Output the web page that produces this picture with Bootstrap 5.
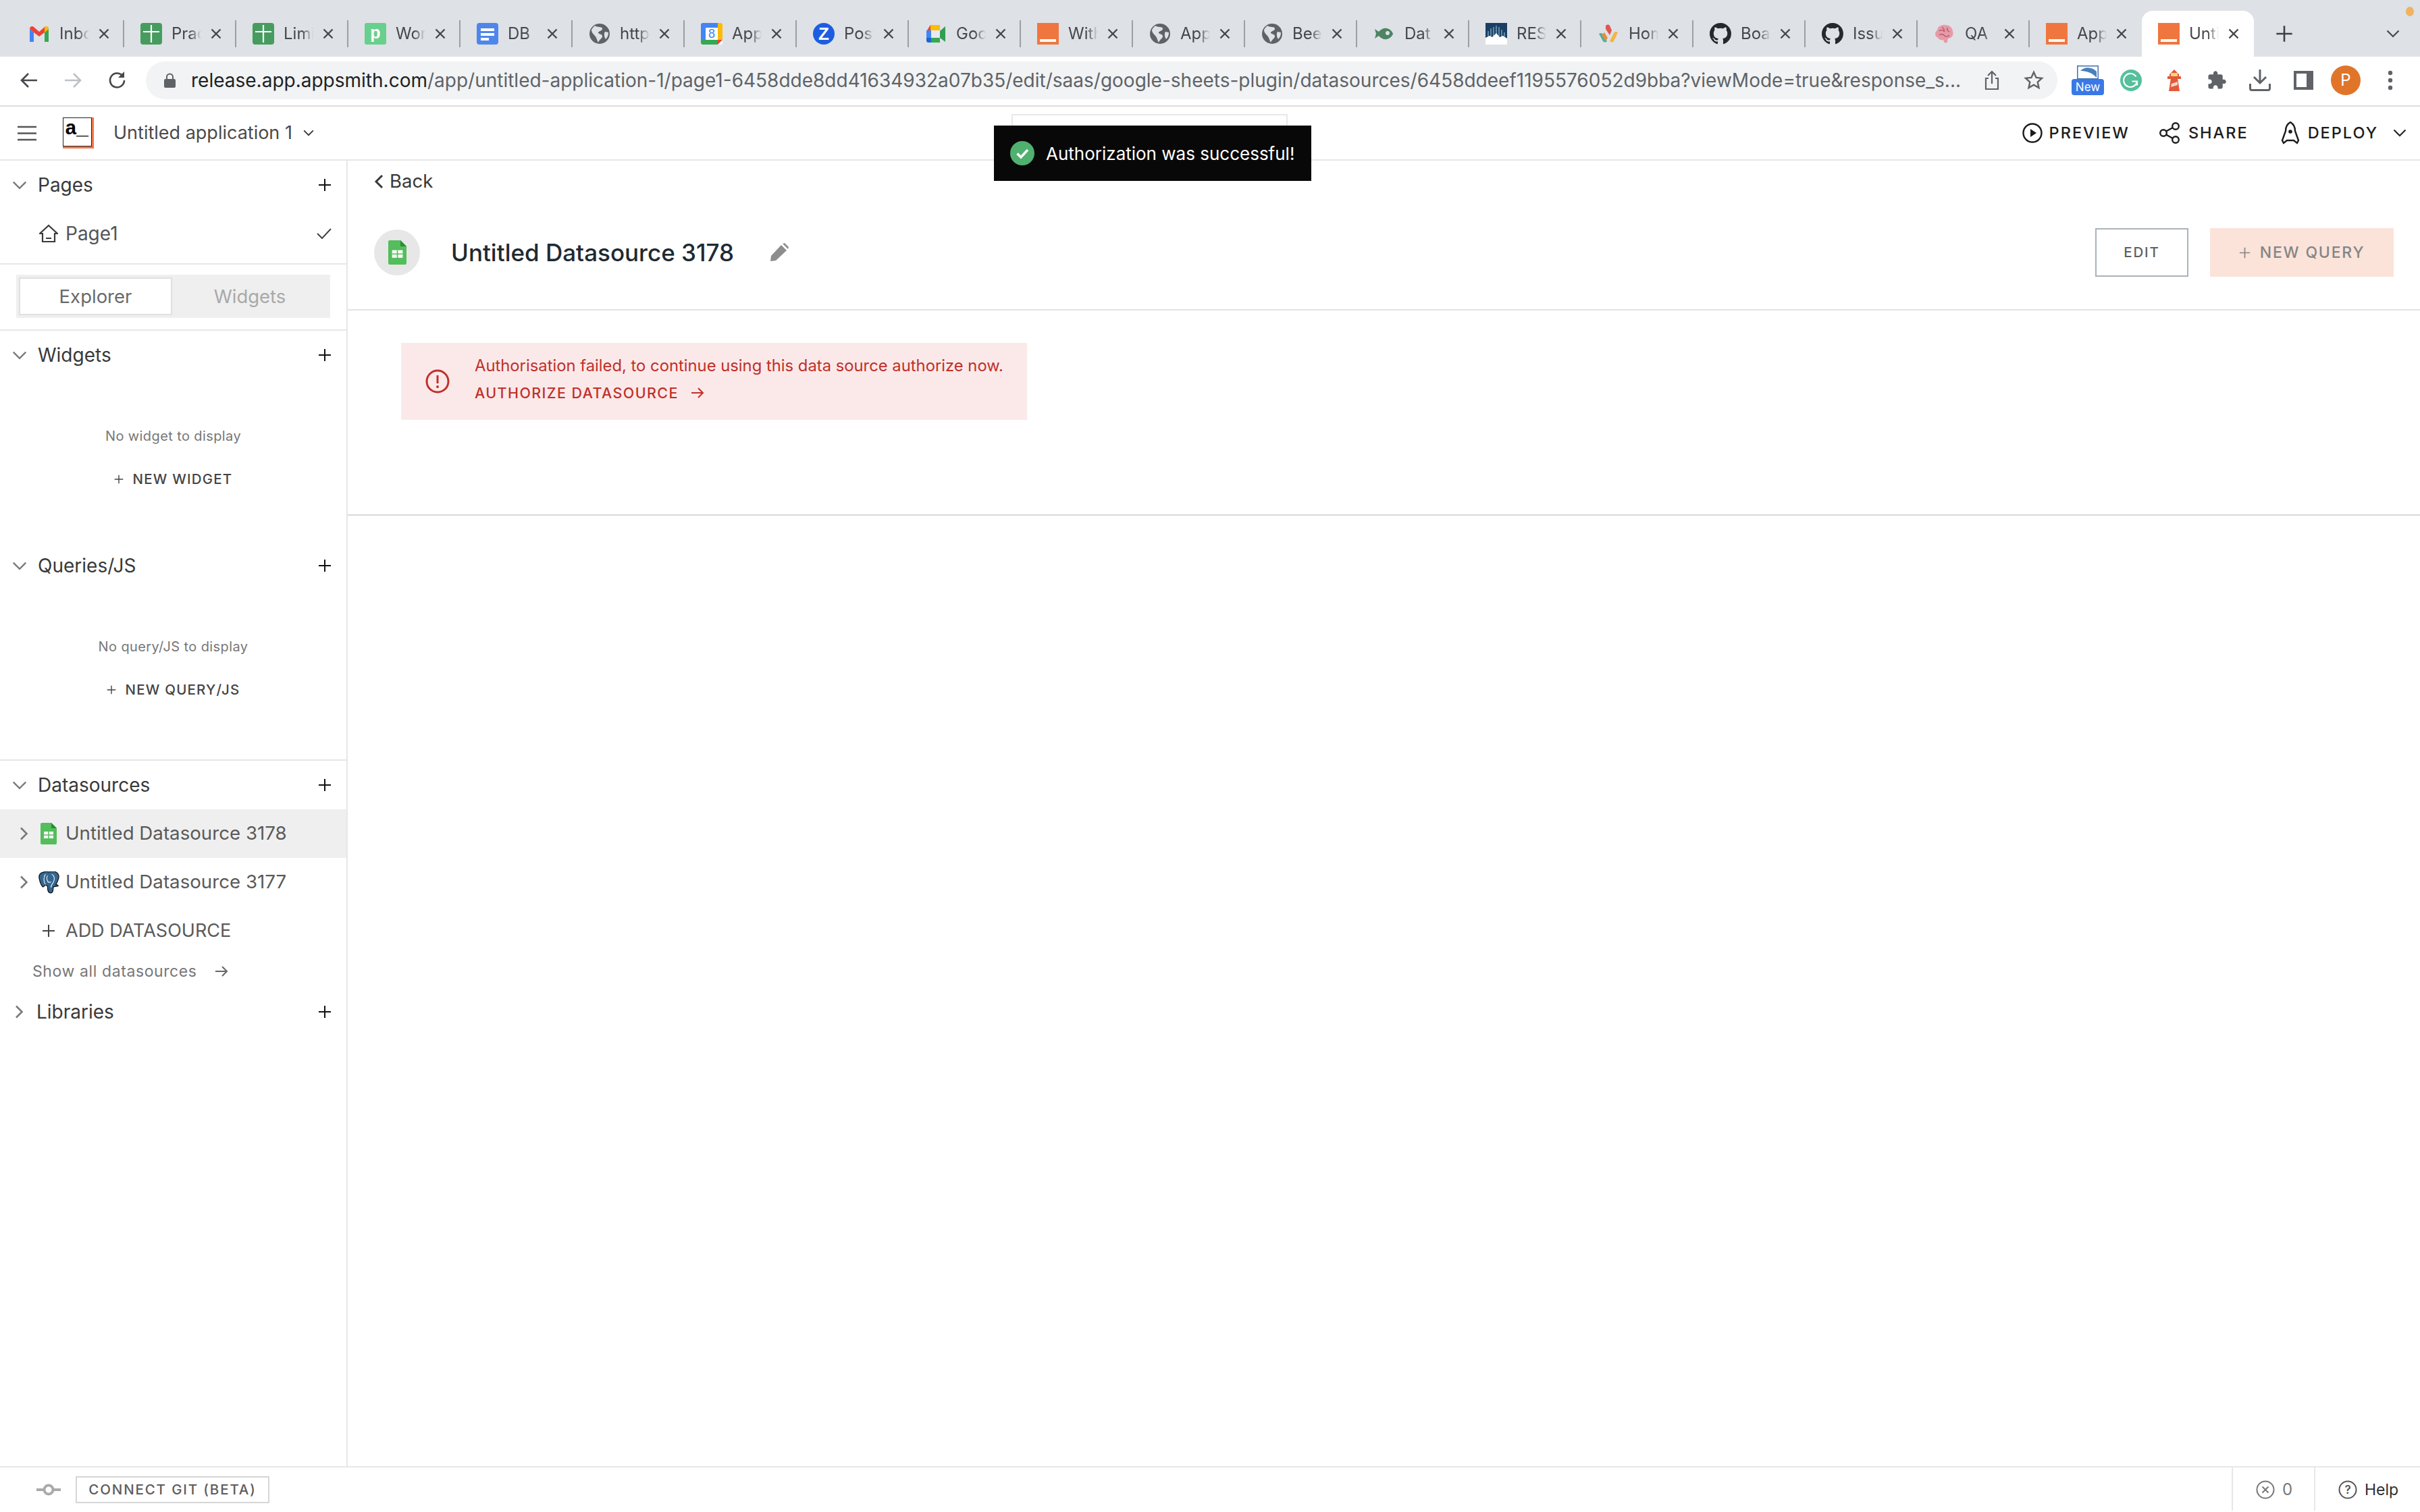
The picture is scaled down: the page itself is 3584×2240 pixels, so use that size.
<!DOCTYPE html>
<html lang="en">
<head>
<meta charset="UTF-8" />
<title>Untitled Datasource 3178</title>
<link href="https://cdn.jsdelivr.net/npm/bootstrap@5.3.3/dist/css/bootstrap.min.css" rel="stylesheet">
<style>
html, body { height: 100%; }
body { font-family: Inter, "Liberation Sans", sans-serif; color: #393939; background: #fff; overflow: hidden; }
svg { display: block; flex: none; }
.shell { height: 2240px; }

/* browser chrome */
.tabstrip { height: 84px; background: #dee1e6; padding: 16px 0 0 18px; position: relative; }
.btab { width: 166px; height: 68px; flex: none; }
.btab-in { height: 40px; width: 100%; padding-left: 24px; border-right: 2px solid #9aa0a6; }
.btab.on { background: #fff; border-radius: 16px 16px 0 0; }
.btab.on .btab-in, .btab.last .btab-in { border-right-color: transparent; }
.btab-txt { width: 44px; margin-left: 14px; font-size: 24px; line-height: 32px; color: #45474b; white-space: nowrap; -webkit-mask-image: linear-gradient(90deg, #000 62%, transparent 100%); mask-image: linear-gradient(90deg, #000 62%, transparent 100%); }
.btab-x { margin-left: 12px; }
.strip-plus { margin-left: 32px; align-self: center; }
.strip-down { margin-left: 138px; align-self: center; }
.strip-dot { position: absolute; right: 9px; top: 10px; width: 12px; height: 14px; border-radius: 50%; background: #f0b35e; }

.toolbar { height: 74px; padding-bottom: 2px; border-bottom: 2px solid #dedede; padding-left: 30px; }
.tb-nav { width: 65px; }
.omni { width: 2831px; height: 56px; margin-left: 28px; background: #f1f3f4; border-radius: 28px; padding-left: 27px; }
.omni-url { width: 2622px; margin-left: 23px; font-size: 28px; line-height: 36px; color: #5f6368; white-space: nowrap; }
.omni-url b { font-weight: 400; color: #202124; }
.omni-tail { margin-left: 34px; gap: 36px; }
.ext-row { margin-left: 21px; }
.ext-new { width: 48px; height: 44px; position: relative; }
.ext-new span { display: block; height: 24px; margin-top: 20px; background: #3b78e7; color: #fff; font-size: 17px; line-height: 24px; text-align: center; border-radius: 4px; position: relative; }
.ext-new svg { position: absolute; left: 8px; top: 0; }
.avatar { width: 44px; height: 44px; border-radius: 50%; background: #e0752a; color: #fff; font-size: 24px; line-height: 44px; text-align: center; }

/* app header */
.apphead { height: 80px; border-bottom: 2px solid #e7e7e7; padding: 0 20px 0 26px; }
.app-logo { width: 46px; height: 46px; margin-left: 39px; position: relative; background: #f0774a; }
.app-logo div { width: 43px; height: 43px; background: #fff; border: 1.5px solid #222; font: 700 30px/32px "Liberation Mono", monospace; color: #000; padding-left: 2px; letter-spacing: -1px; }
.app-name { margin-left: 29px; font-size: 27px; color: #4b4b4b; line-height: 36px; }
.head-act { font-size: 23.5px; font-weight: 500; letter-spacing: 2px; color: #1c1c1c; line-height: 30px; }

/* body */
.workarea { height: 1934px; }
.sidebar { width: 515px; flex: none; border-right: 2px solid #e7e7e7; }
.sec-head { height: 72px; padding: 0 22px 0 18px; font-size: 28px; color: #393939; }
.sec-head .sec-name { margin-left: 16px; line-height: 36px; }
.sec-head .sec-plus { margin-left: auto; }
.page-row { height: 72px; padding: 0 22px 0 58px; font-size: 28px; color: #555; margin-bottom: 8px; }
.page-row span { margin-left: 11px; }
.rule { height: 2px; background: #e7e7e7; }
.switcher-wrap { padding: 15px 24px 17px; }
.switcher { height: 64px; background: #efefef; padding: 4px; font-size: 27.5px; text-align: center; }
.sw-on { width: 227px; height: 56px; background: #fff; border: 2px solid #e0e0e0; color: #6a6a6a; line-height: 52px; }
.sw-off { flex: 1; color: #a9a9a9; line-height: 56px; }
.empty-box { text-align: center; padding-top: 70px; }
.empty-box.w { height: 240px; }
.empty-box.q { height: 251px; }
.empty-txt { font-size: 20px; line-height: 28px; letter-spacing: .4px; color: #777; }
.empty-btn { margin-top: 36px; font-size: 20.5px; line-height: 28px; font-weight: 500; letter-spacing: 1.2px; color: #444; gap: 14px; }
.ds-row { height: 72px; padding-left: 29px; font-size: 27.7px; color: #5a5a5a; }
.ds-row.sel { background: #efefef; }
.ds-row .ds-ico { width: 32px; margin-left: 14px; margin-right: 9px; }
.ds-add { padding-left: 62px; font-size: 27px; }
.ds-add span { margin-left: 15px; }
.ds-all { height: 48px; padding-left: 48px; font-size: 23px; letter-spacing: .6px; color: #777; gap: 26px; }

.main-pane { flex: 1; min-width: 0; }
.back-row { height: 62px; padding-left: 39px; font-size: 27.5px; color: #393939; }
.back-row span { margin-left: 9px; }
.ds-head { height: 160px; padding: 0 39px 0 39px; border-bottom: 2px solid #e3e3e3; }
.ds-circle { width: 68px; height: 68px; border-radius: 50%; background: #e7e7e7; margin-top: -10px; }
.ds-title { margin: -10px 0 0 46px; font-size: 35px; line-height: 44px; font-weight: 500; color: #1e2a32; }
.ds-pencil { margin: -10px 0 0 53px; }
.edit-btn, .newq-btn { height: 72px; border-radius: 0; font-size: 20.5px; font-weight: 500; letter-spacing: 1.8px; margin-top: -10px; }
.edit-btn { width: 138px; border: 2px solid #a9b3bb; color: #5f5f5f; }
.newq-btn { width: 272px; margin-left: 32px; background: #fbe3da; color: #858585; border: 0; gap: 14px; font-size: 23px; }
.authbox { height: 304px; padding: 48px 0 0 79px; border-bottom: 2px solid #d5dade; }
.authbanner { width: 927px; height: 114px; background: #fbe9e9; padding-left: 36px; color: #c0302a; }
.auth-txt { margin: -7px 0 0 37px; }
.auth-msg { font-size: 23.8px; line-height: 30px; white-space: nowrap; }
.auth-link { margin-top: 10px; font-size: 21.5px; line-height: 30px; font-weight: 500; letter-spacing: 1.4px; gap: 18px; }

/* footer */
.appfoot { height: 66px; border-top: 2px solid #e7e7e7; padding: 2px 0 0 54px; }
.git-btn { width: 287px; height: 40px; margin-left: 22px; border: 2px solid #d6d6d6; font-size: 20.5px; line-height: 36px; font-weight: 500; letter-spacing: 1.85px; color: #5c5c5c; text-align: center; white-space: nowrap; }
.foot-err { width: 122px; margin: -2px 0 0 auto; height: 64px; border-left: 2px solid #e7e7e7; padding: 2px 0 0 34px; gap: 11px; font-size: 24px; color: #777; }
.foot-help { width: 157px; margin-top: -2px; height: 64px; border-left: 2px solid #e7e7e7; padding: 2px 0 0 34px; gap: 11px; font-size: 23px; color: #2b2f33; }

/* over the header */
.searchghost { position: absolute; left: 1498px; top: 169px; width: 409px; height: 40px; border: 2px solid #e8e8e8; background: #fff; }
.toast-ok { position: absolute; left: 1472px; top: 186px; width: 470px; height: 82px; background: #090808; padding-left: 24px; color: #fff; font-size: 26px; }
.toast-ok span { margin-left: 17px; white-space: nowrap; }
</style>
</head>
<body>
<svg class="d-none">
  <symbol id="i-x" viewBox="0 0 20 20"><path d="M3.5 3.5l13 13M16.5 3.5l-13 13" stroke="#45474b" stroke-width="2.4" fill="none"/></symbol>
  <symbol id="f-gmail" viewBox="0 0 32 32"><path d="M2 28V9l6 5v14z" fill="#4285f4"/><path d="M24 28V14l6-5v19z" fill="#34a853"/><path d="M2 9c0-4 4-5 6-3l8 7 8-7c2-2 6-1 6 3l-6 5-8 6-8-6z" fill="#ea4335"/><path d="M24 14V6c2-2 6-1 6 3z" fill="#fbbc04"/></symbol>
  <symbol id="f-sheet" viewBox="0 0 32 32"><rect width="32" height="32" rx="4" fill="#469c5e"/><path d="M16 3v26M4 13h24" stroke="#fff" stroke-width="2.2"/></symbol>
  <symbol id="f-p" viewBox="0 0 32 32"><rect width="32" height="32" rx="3" fill="#69cf8d"/><text x="16" y="23" text-anchor="middle" font-family="Liberation Sans" font-weight="700" font-size="25" fill="#fff">p</text></symbol>
  <symbol id="f-doc" viewBox="0 0 32 32"><rect width="32" height="32" rx="4" fill="#4f86ec"/><path d="M6 8h20v4H6zM6 15h20v4H6zM6 22h12v4H6z" fill="#fff"/></symbol>
  <symbol id="f-globe" viewBox="0 0 32 32"><circle cx="16" cy="16" r="15" fill="#5f6368"/><path d="M9 4c4 3 10 1 11 4s-5 4-6 6 5 2 6 5-5 6-6 10c-2-3-2-7-5-10S4 13 4 11s3-5 5-7zM24 13l5 1c0 4-1 7-4 10-2-3-3-8-1-11z" fill="#dee1e6"/></symbol>
  <symbol id="f-cal" viewBox="0 0 32 32"><rect width="32" height="32" rx="3" fill="#fff"/><path d="M0 7V3a3 3 0 0 1 3-3h23v7z" fill="#4285f4"/><path d="M0 7h7v18H0z" fill="#4285f4"/><path d="M25 0h4a3 3 0 0 1 3 3v22h-7z" fill="#fbbc04"/><path d="M0 25h25v7H3a3 3 0 0 1-3-3z" fill="#34a853"/><path d="M25 25h7l-7 7z" fill="#ea4335"/><text x="16" y="22" text-anchor="middle" font-family="Liberation Sans" font-size="18" fill="#4285f4">8</text></symbol>
  <symbol id="f-zoom" viewBox="0 0 32 32"><circle cx="16" cy="16" r="16" fill="#1d5de0"/><text x="16" y="25" text-anchor="middle" font-family="Liberation Sans" font-weight="700" font-size="26" fill="#fff">Z</text></symbol>
  <symbol id="f-meet" viewBox="0 0 32 32"><path d="M8 3h14v9H3z" fill="#fbbc04"/><path d="M2 11h7v11H2z" fill="#4285f4"/><path d="M2 22h7v7H5a3 3 0 0 1-3-3z" fill="#1967d2"/><path d="M9 22h13v7H9z" fill="#34a853"/><path d="M22 12v10l8 6V5z" fill="#2f9e52"/><path d="M9 11h13v11H9z" fill="#e7eaf0"/><path d="M3 11l5-8v8z" fill="#ea4335"/></symbol>
  <symbol id="f-app" viewBox="0 0 32 32"><rect width="32" height="32" fill="#f0763f"/><rect x="4" y="24" width="24" height="4" fill="#fff"/></symbol>
  <symbol id="f-fish" viewBox="0 0 32 32"><path d="M2 9l6 4c3-4 8-6 12-5 5 1 8 5 9 8-1 3-4 7-9 8-4 1-9-1-12-5l-6 4 2-7z" fill="#4c8464"/><circle cx="21" cy="15" r="3" fill="#dee1e6"/></symbol>
  <symbol id="f-res" viewBox="0 0 32 32"><rect width="32" height="32" fill="#1b3f63"/><path d="M4 20V12M8 20V8M12 20V6M16 20V4M20 20V6M24 20V10M28 20V14" stroke="#6f9bb8" stroke-width="1.6"/><path d="M0 32V22l6-3 4 2 6-6 5 6 5-2 6 4v9z" fill="#fff"/></symbol>
  <symbol id="f-flower" viewBox="0 0 32 32"><path d="M2 16c3-2 5-1 6 1l6 10c-2 2-4 2-6 0z" fill="#45b39d"/><path d="M12 4c2-2 5-2 6 0l3 7-3 7-6-9z" fill="#e2574c"/><path d="M30 14c-3-2-5-1-6 1l-6 12c2 2 4 2 6 0z" fill="#f2b544"/><path d="M10 14l5 8-3 5-6-9z" fill="#e98b3a"/></symbol>
  <symbol id="f-gh" viewBox="0 0 16 16"><path fill="#24292e" d="M8 0C3.58 0 0 3.58 0 8c0 3.54 2.29 6.53 5.47 7.59.4.07.55-.17.55-.38 0-.19-.01-.82-.01-1.49-2.01.37-2.53-.49-2.69-.94-.09-.23-.48-.94-.82-1.13-.28-.15-.68-.52-.01-.53.63-.01 1.08.58 1.23.82.72 1.21 1.87.87 2.33.66.07-.52.28-.87.51-1.07-1.78-.2-3.64-.89-3.64-3.95 0-.87.31-1.59.82-2.15-.08-.2-.36-1.02.08-2.12 0 0 .67-.21 2.2.82.64-.18 1.32-.27 2-.27.68 0 1.36.09 2 .27 1.53-1.04 2.2-.82 2.2-.82.44 1.1.16 1.92.08 2.12.51.56.82 1.27.82 2.15 0 3.07-1.87 3.75-3.65 3.95.29.25.54.73.54 1.48 0 1.07-.01 1.93-.01 2.2 0 .21.15.46.55.38A8.013 8.013 0 0016 8c0-4.42-3.58-8-8-8z"/></symbol>
  <symbol id="f-brain" viewBox="0 0 32 32"><path d="M6 22C1 20 1 13 5 11c0-5 6-9 12-8 6 0 11 4 11 10 2 5-2 10-7 10l-1 5c-1 2-4 2-5 0l-1-3c-3 1-6 0-8-3z" fill="#e79aa7"/><path d="M8 12c3-3 6-1 8 1M12 6c3 2 4 4 3 7M20 7c-1 3 0 5 3 6M8 18c3-2 6-1 8 1s5 1 7-1" stroke="#b65a6e" stroke-width="1.5" fill="none"/></symbol>
  <symbol id="i-sheet" viewBox="0 0 24 32"><path d="M2 0h14l8 8v22a2 2 0 0 1-2 2H2a2 2 0 0 1-2-2V2a2 2 0 0 1 2-2z" fill="#53be5b"/><path d="M16 0l8 8h-8z" fill="#2f8a3a"/><path d="M5 13h14v10H5z" fill="#fff"/><path d="M12 13v10M5 18h14" stroke="#53be5b" stroke-width="1.5"/></symbol>
  <symbol id="i-plus" viewBox="0 0 20 20"><path d="M10 1v18M1 10h18" stroke="currentColor" stroke-width="2" fill="none"/></symbol>
  <symbol id="i-chev" viewBox="0 0 20 12"><path d="M1.5 1.5L10 10l8.500-8.500" stroke="currentColor" stroke-width="2.2" fill="none"/></symbol>
  <symbol id="i-chevr" viewBox="0 0 12 20"><path d="M1.5 1.5L10 10l-8.500 8.500" stroke="currentColor" stroke-width="2.6" fill="none"/></symbol>
  <symbol id="i-arrow" viewBox="0 0 20 18"><path d="M1 9h17M11 2l7 7-7 7" stroke="currentColor" stroke-width="2" fill="none"/></symbol>
</svg>

<div class="shell d-flex flex-column">

  <div class="tabstrip d-flex">
    <div class="btab d-flex align-items-center"><div class="btab-in d-flex align-items-center"><svg width="32" height="32"><use href="#f-gmail"/></svg><div class="btab-txt">Inbox</div><svg class="btab-x" width="20" height="20"><use href="#i-x"/></svg></div></div>
    <div class="btab d-flex align-items-center"><div class="btab-in d-flex align-items-center"><svg width="32" height="32"><use href="#f-sheet"/></svg><div class="btab-txt">Pract</div><svg class="btab-x" width="20" height="20"><use href="#i-x"/></svg></div></div>
    <div class="btab d-flex align-items-center"><div class="btab-in d-flex align-items-center"><svg width="32" height="32"><use href="#f-sheet"/></svg><div class="btab-txt">Limit</div><svg class="btab-x" width="20" height="20"><use href="#i-x"/></svg></div></div>
    <div class="btab d-flex align-items-center"><div class="btab-in d-flex align-items-center"><svg width="32" height="32"><use href="#f-p"/></svg><div class="btab-txt">Work</div><svg class="btab-x" width="20" height="20"><use href="#i-x"/></svg></div></div>
    <div class="btab d-flex align-items-center"><div class="btab-in d-flex align-items-center"><svg width="32" height="32"><use href="#f-doc"/></svg><div class="btab-txt">DB</div><svg class="btab-x" width="20" height="20"><use href="#i-x"/></svg></div></div>
    <div class="btab d-flex align-items-center"><div class="btab-in d-flex align-items-center"><svg width="32" height="32"><use href="#f-globe"/></svg><div class="btab-txt">https</div><svg class="btab-x" width="20" height="20"><use href="#i-x"/></svg></div></div>
    <div class="btab d-flex align-items-center"><div class="btab-in d-flex align-items-center"><svg width="32" height="32"><use href="#f-cal"/></svg><div class="btab-txt">Appl</div><svg class="btab-x" width="20" height="20"><use href="#i-x"/></svg></div></div>
    <div class="btab d-flex align-items-center"><div class="btab-in d-flex align-items-center"><svg width="32" height="32"><use href="#f-zoom"/></svg><div class="btab-txt">Post</div><svg class="btab-x" width="20" height="20"><use href="#i-x"/></svg></div></div>
    <div class="btab d-flex align-items-center"><div class="btab-in d-flex align-items-center"><svg width="32" height="32"><use href="#f-meet"/></svg><div class="btab-txt">Goog</div><svg class="btab-x" width="20" height="20"><use href="#i-x"/></svg></div></div>
    <div class="btab d-flex align-items-center"><div class="btab-in d-flex align-items-center"><svg width="32" height="32"><use href="#f-app"/></svg><div class="btab-txt">With</div><svg class="btab-x" width="20" height="20"><use href="#i-x"/></svg></div></div>
    <div class="btab d-flex align-items-center"><div class="btab-in d-flex align-items-center"><svg width="32" height="32"><use href="#f-globe"/></svg><div class="btab-txt">Appl</div><svg class="btab-x" width="20" height="20"><use href="#i-x"/></svg></div></div>
    <div class="btab d-flex align-items-center"><div class="btab-in d-flex align-items-center"><svg width="32" height="32"><use href="#f-globe"/></svg><div class="btab-txt">Beet</div><svg class="btab-x" width="20" height="20"><use href="#i-x"/></svg></div></div>
    <div class="btab d-flex align-items-center"><div class="btab-in d-flex align-items-center"><svg width="32" height="32"><use href="#f-fish"/></svg><div class="btab-txt">Dat</div><svg class="btab-x" width="20" height="20"><use href="#i-x"/></svg></div></div>
    <div class="btab d-flex align-items-center"><div class="btab-in d-flex align-items-center"><svg width="32" height="32"><use href="#f-res"/></svg><div class="btab-txt">RES</div><svg class="btab-x" width="20" height="20"><use href="#i-x"/></svg></div></div>
    <div class="btab d-flex align-items-center"><div class="btab-in d-flex align-items-center"><svg width="32" height="32"><use href="#f-flower"/></svg><div class="btab-txt">Hom</div><svg class="btab-x" width="20" height="20"><use href="#i-x"/></svg></div></div>
    <div class="btab d-flex align-items-center"><div class="btab-in d-flex align-items-center"><svg width="32" height="32"><use href="#f-gh"/></svg><div class="btab-txt">Boar</div><svg class="btab-x" width="20" height="20"><use href="#i-x"/></svg></div></div>
    <div class="btab d-flex align-items-center"><div class="btab-in d-flex align-items-center"><svg width="32" height="32"><use href="#f-gh"/></svg><div class="btab-txt">Issue</div><svg class="btab-x" width="20" height="20"><use href="#i-x"/></svg></div></div>
    <div class="btab d-flex align-items-center"><div class="btab-in d-flex align-items-center"><svg width="32" height="32"><use href="#f-brain"/></svg><div class="btab-txt">QA</div><svg class="btab-x" width="20" height="20"><use href="#i-x"/></svg></div></div>
    <div class="btab last d-flex align-items-center"><div class="btab-in d-flex align-items-center"><svg width="32" height="32"><use href="#f-app"/></svg><div class="btab-txt">Appl</div><svg class="btab-x" width="20" height="20"><use href="#i-x"/></svg></div></div>
    <div class="btab on d-flex align-items-center"><div class="btab-in d-flex align-items-center"><svg width="32" height="32"><use href="#f-app"/></svg><div class="btab-txt">Untit</div><svg class="btab-x" width="20" height="20"><use href="#i-x"/></svg></div></div>
    <svg class="strip-plus" width="26" height="26" style="color:#3c4043"><use href="#i-plus"/></svg>
    <svg class="strip-down" width="20" height="12" style="color:#45474b"><use href="#i-chev"/></svg>
    <div class="strip-dot"></div>
  </div>

  <div class="toolbar d-flex align-items-center">
    <div class="tb-nav"><svg width="26" height="26" viewBox="0 0 26 26"><path d="M25 13H3M12 3L2 13l10 10" stroke="#45474b" stroke-width="2.6" fill="none"/></svg></div>
    <div class="tb-nav"><svg width="26" height="26" viewBox="0 0 26 26"><path d="M1 13h22M14 3l10 10-10 10" stroke="#bdc1c6" stroke-width="2.6" fill="none"/></svg></div>
    <svg width="28" height="28" viewBox="0 0 28 28"><path d="M24 14a10.5 10.5 0 1 1-3-7.4" stroke="#45474b" stroke-width="2.6" fill="none"/><path d="M24 1v9h-9z" fill="#45474b"/></svg>
    <div class="omni d-flex align-items-center">
      <svg width="17" height="22" viewBox="0 0 17 22"><path d="M4 10V6a4.5 4.5 0 0 1 9 0v4" stroke="#5f6368" stroke-width="2" fill="none"/><rect y="9" width="17" height="13" rx="2" fill="#5f6368"/></svg>
      <div class="omni-url"><b>release.app.appsmith.com</b>/app/untitled-application-1/page1-6458dde8dd41634932a07b35/edit/saas/google-sheets-plugin/datasources/6458ddeef1195576052d9bba?viewMode=true&amp;response_s...</div>
      <div class="omni-tail d-flex align-items-center">
        <svg width="22" height="30" viewBox="0 0 22 30"><path d="M11 20V2M5 8l6-6 6 6M6 12H2v16h18V12h-4" stroke="#5f6368" stroke-width="2.2" fill="none"/></svg>
        <svg width="30" height="30" viewBox="0 0 30 30"><path d="M15 3l3.6 8 8.4.9-6.3 5.7 1.8 8.4L15 21.6 7.5 26l1.8-8.4L3 11.900l8.400-.9z" stroke="#5f6368" stroke-width="2.4" fill="none"/></svg>
      </div>
    </div>
    <div class="ext-row d-flex align-items-center">
      <div class="ext-new"><svg width="32" height="20" viewBox="0 0 32 20"><rect x=".75" y=".75" width="30.5" height="19" fill="#fff" stroke="#3f6fb0" stroke-width="1.5"/><path d="M5 8c6-7 18-6 24 1v9C22 10 12 8 5 8z" fill="#4a7fbe"/></svg><span>New</span></div>
      <svg style="margin-left:24px" width="32" height="32" viewBox="0 0 32 32"><circle cx="16" cy="16" r="16" fill="#55c09b"/><path d="M23.500 10.500a10 10 0 1 0 1.500 7h-7.500M25 17.500v6" stroke="#fff" stroke-width="2.2" fill="none"/></svg>
      <svg style="margin-left:37px" width="22" height="32" viewBox="0 0 22 32"><path d="M3 32L6 13h10l3 19z" fill="#e2593a"/><path d="M4 7l7-7 7 7v3H4z" fill="#e2593a"/><rect x="6" y="5" width="10" height="7" fill="#f4d77a"/><rect x="1" y="10" width="20" height="4" fill="#e2593a"/><path d="M7 21l9-3v5l-10 3z" fill="#f7d5c8"/></svg>
      <svg style="margin-left:37px" width="30" height="30" viewBox="0 0 24 24"><path fill="#5f6368" d="M20.500 11H19V7c0-1.100-.9-2-2-2h-4V3.500C13 2.120 11.880 1 10.500 1S8 2.120 8 3.500V5H4c-1.100 0-1.990.9-1.990 2v3.800H3.500c1.490 0 2.700 1.210 2.700 2.700s-1.210 2.700-2.700 2.700H2V20c0 1.100.9 2 2 2h3.800v-1.500c0-1.490 1.210-2.700 2.700-2.700 1.490 0 2.700 1.210 2.700 2.700V22H17c1.100 0 2-.9 2-2v-4h1.500c1.380 0 2.500-1.120 2.500-2.500S21.880 11 20.500 11z"/></svg>
      <svg style="margin-left:33px" width="32" height="32" viewBox="0 0 32 32"><path d="M16 0v20M7 11l9 9 9-9M1.500 21v7a2.500 2.500 0 0 0 2.500 2.500h24a2.500 2.500 0 0 0 2.500-2.500v-7" stroke="#5f6368" stroke-width="3" fill="none"/></svg>
      <svg style="margin-left:34px" width="29" height="28" viewBox="0 0 29 28"><path d="M0 0h29v28H0z" fill="#5f6368"/><path d="M4 4h15v20H4z" fill="#fff"/></svg>
      <div class="avatar" style="margin-left:26px">P</div>
      <svg style="margin-left:40px" width="8" height="30" viewBox="0 0 8 30"><circle cx="4" cy="4" r="3.2" fill="#5f6368"/><circle cx="4" cy="15" r="3.2" fill="#5f6368"/><circle cx="4" cy="26" r="3.2" fill="#5f6368"/></svg>
    </div>
  </div>

  <div class="apphead d-flex align-items-center">
    <svg width="28" height="23" viewBox="0 0 28 23"><path d="M0 2h28M0 11.500h28M0 21h28" stroke="#555" stroke-width="2.6"/></svg>
    <div class="app-logo"><div>a_</div></div>
    <div class="app-name">Untitled application 1</div>
    <svg class="ms-3" width="16" height="10" style="color:#333"><use href="#i-chev"/></svg>
    <div class="d-flex align-items-center ms-auto head-act">
      <svg width="30" height="30" viewBox="0 0 30 30"><circle cx="15" cy="15" r="13.500" stroke="#1c1c1c" stroke-width="2.4" fill="none"/><path d="M12 9l9 6-9 6z" fill="#1c1c1c"/></svg>
      <span style="margin-left:10px">PREVIEW</span>
      <svg style="margin-left:44px" width="31" height="32" viewBox="0 0 31 32"><g stroke="#1c1c1c" stroke-width="2.4" fill="none"><circle cx="6" cy="16" r="4.800"/><circle cx="24" cy="6" r="4.800"/><circle cx="24" cy="26" r="4.800"/><path d="M10 13.500l10-5.500M10 18.500l10 5.500"/></g></svg>
      <span style="margin-left:12px">SHARE</span>
      <svg style="margin-left:48px" width="28" height="34" viewBox="0 0 28 34"><path d="M14 1c5 3 7 8 7 13l5 14-2 4-5-4H9l-5 4-2-4 5-14C7 9 9 4 14 1z" stroke="#1c1c1c" stroke-width="2.4" fill="none"/><circle cx="14" cy="15" r="2.8" fill="#1c1c1c"/></svg>
      <span style="margin-left:12px">DEPLOY</span>
      <svg class="text-dark" style="margin-left:22px" width="20" height="12"><use href="#i-chev"/></svg>
    </div>
  </div>

  <div class="workarea d-flex">
    <div class="sidebar">
      <div class="sec-head d-flex align-items-center">
        <svg width="22" height="13" style="color:#7a7a7a"><use href="#i-chev"/></svg><div class="sec-name">Pages</div>
        <svg class="sec-plus" width="20" height="20" style="color:#111"><use href="#i-plus"/></svg>
      </div>
      <div class="page-row d-flex align-items-center">
        <svg width="28" height="28" viewBox="0 0 28 28"><path d="M1 14L14 2l13 12h-4v12H5V14z M10 21h8" stroke="#3a3a3a" stroke-width="2.2" fill="none"/></svg>
        <span>Page1</span>
        <svg class="ms-auto" width="22" height="16" viewBox="0 0 22 16"><path d="M1 8l7 7L21 1" stroke="#444" stroke-width="2" fill="none"/></svg>
      </div>
      <div class="rule"></div>
      <div class="switcher-wrap">
        <div class="switcher d-flex">
          <div class="sw-on">Explorer</div>
          <div class="sw-off">Widgets</div>
        </div>
      </div>
      <div class="rule"></div>
      <div class="sec-head d-flex align-items-center">
        <svg width="22" height="13" style="color:#7a7a7a"><use href="#i-chev"/></svg><div class="sec-name">Widgets</div>
        <svg class="sec-plus" width="20" height="20" style="color:#111"><use href="#i-plus"/></svg>
      </div>
      <div class="empty-box w">
        <div class="empty-txt">No widget to display</div>
        <div class="empty-btn d-flex align-items-center justify-content-center"><svg width="14" height="14" style="color:#444"><use href="#i-plus"/></svg>NEW WIDGET</div>
      </div>
      <div class="sec-head d-flex align-items-center">
        <svg width="22" height="13" style="color:#7a7a7a"><use href="#i-chev"/></svg><div class="sec-name">Queries/JS</div>
        <svg class="sec-plus" width="20" height="20" style="color:#111"><use href="#i-plus"/></svg>
      </div>
      <div class="empty-box q">
        <div class="empty-txt">No query/JS to display</div>
        <div class="empty-btn d-flex align-items-center justify-content-center"><svg width="14" height="14" style="color:#444"><use href="#i-plus"/></svg>NEW QUERY/JS</div>
      </div>
      <div class="rule"></div>
      <div class="sec-head d-flex align-items-center">
        <svg width="22" height="13" style="color:#7a7a7a"><use href="#i-chev"/></svg><div class="sec-name">Datasources</div>
        <svg class="sec-plus" width="20" height="20" style="color:#111"><use href="#i-plus"/></svg>
      </div>
      <div class="ds-row sel d-flex align-items-center">
        <svg width="13" height="20" style="color:#7a7a7a"><use href="#i-chevr"/></svg>
        <div class="ds-ico d-flex justify-content-center"><svg width="24" height="32"><use href="#i-sheet"/></svg></div>
        <span>Untitled Datasource 3178</span>
      </div>
      <div class="ds-row d-flex align-items-center">
        <svg width="13" height="20" style="color:#7a7a7a"><use href="#i-chevr"/></svg>
        <div class="ds-ico d-flex justify-content-center"><svg width="31" height="33" viewBox="0 0 30 32"><path d="M8 1C3 1 0 5 1 10c1 5 3 10 5 12 2 1 3-1 4-3 1 1 2 2 3 2 0 4 0 9 4 10 3 0 4-2 4-6 0-1 0-2 1-3l6-1c1-1-1-2-3-2 2-4 5-9 4-13-1-4-5-6-9-6-2 0-3 0-5 1-3-1-5-1-7-1z" fill="#336791" stroke="#111" stroke-width="1.2"/><path d="M10 4C7 8 7 14 10 19M19 4c4 2 5 7 2 12-1 2-3 3-3 7M13 6c-2 3-1 7 1 9M13 15c2 1 3 1 5 0" stroke="#fff" stroke-width="1" fill="none"/></svg></div>
        <span>Untitled Datasource 3177</span>
      </div>
      <div class="ds-row ds-add d-flex align-items-center">
        <svg width="20" height="20" style="color:#444"><use href="#i-plus"/></svg>
        <span>ADD DATASOURCE</span>
      </div>
      <div class="ds-all d-flex align-items-center">Show all datasources<svg width="20" height="18" style="color:#666"><use href="#i-arrow"/></svg></div>
      <div class="sec-head d-flex align-items-center">
        <svg class="mx-1" width="13" height="20" style="color:#7a7a7a"><use href="#i-chevr"/></svg><div class="sec-name" style="margin-left:15px">Libraries</div>
        <svg class="sec-plus" width="20" height="20" style="color:#111"><use href="#i-plus"/></svg>
      </div>
    </div>

    <div class="main-pane">
      <div class="back-row d-flex align-items-center">
        <svg width="14" height="22" viewBox="0 0 14 22"><path d="M12 2L3 11l9 9" stroke="#393939" stroke-width="3" fill="none"/></svg>
        <span>Back</span>
      </div>
      <div class="ds-head d-flex align-items-center">
        <div class="ds-circle d-flex align-items-center justify-content-center"><svg width="27" height="36"><use href="#i-sheet"/></svg></div>
        <div class="ds-title">Untitled Datasource 3178</div>
        <svg class="ds-pencil" width="28" height="28" viewBox="0 0 28 28"><path d="M1 27l1-8L17 3l8 8L9 26z" fill="#8d8d8d"/><path d="M19 1l3-1 6 6-1 3z" fill="#8d8d8d"/></svg>
        <button type="button" class="btn edit-btn ms-auto">EDIT</button>
        <button type="button" class="btn newq-btn d-flex align-items-center justify-content-center"><svg width="17" height="17"><use href="#i-plus"/></svg>NEW QUERY</button>
      </div>
      <div class="authbox">
        <div class="authbanner d-flex align-items-center">
          <svg width="36" height="36" viewBox="0 0 36 36"><circle cx="18" cy="18" r="16" stroke="#c0302a" stroke-width="3" fill="none"/><path d="M18 9v12" stroke="#c0302a" stroke-width="3"/><circle cx="18" cy="26" r="2" fill="#c0302a"/></svg>
          <div class="auth-txt">
            <div class="auth-msg">Authorisation failed, to continue using this data source authorize now.</div>
            <div class="auth-link d-flex align-items-center">AUTHORIZE DATASOURCE<svg width="20" height="18"><use href="#i-arrow"/></svg></div>
          </div>
        </div>
      </div>
    </div>
  </div>

  <div class="appfoot d-flex align-items-center">
    <svg width="36" height="18" viewBox="0 0 36 18"><path d="M0 9h36" stroke="#aaa" stroke-width="4"/><circle cx="18" cy="9" r="6.500" fill="#fff" stroke="#aaa" stroke-width="4"/></svg>
    <div class="git-btn">CONNECT GIT (BETA)</div>
    <div class="foot-err d-flex align-items-center"><svg width="28" height="28" viewBox="0 0 28 28"><circle cx="14" cy="14" r="12.500" stroke="#777" stroke-width="2" fill="none"/><path d="M9.500 9.500l9 9M18.500 9.500l-9 9" stroke="#777" stroke-width="2"/></svg>0</div>
    <div class="foot-help d-flex align-items-center"><svg width="28" height="28" viewBox="0 0 28 28"><circle cx="14" cy="14" r="12.500" stroke="#555" stroke-width="2" fill="none"/><text x="14" y="20" text-anchor="middle" font-family="Inter" font-weight="600" font-size="17" fill="#555">?</text></svg>Help</div>
  </div>
</div>

<div class="searchghost"></div>
<div class="toast-ok d-flex align-items-center">
  <svg width="36" height="36" viewBox="0 0 36 36"><circle cx="18" cy="18" r="18" fill="#50b06f"/><path d="M10.500 18.500l5.500 5.500 10-11" stroke="#fff" stroke-width="3.6" fill="none"/></svg>
  <span>Authorization was successful!</span>
</div>
</body>
</html>
